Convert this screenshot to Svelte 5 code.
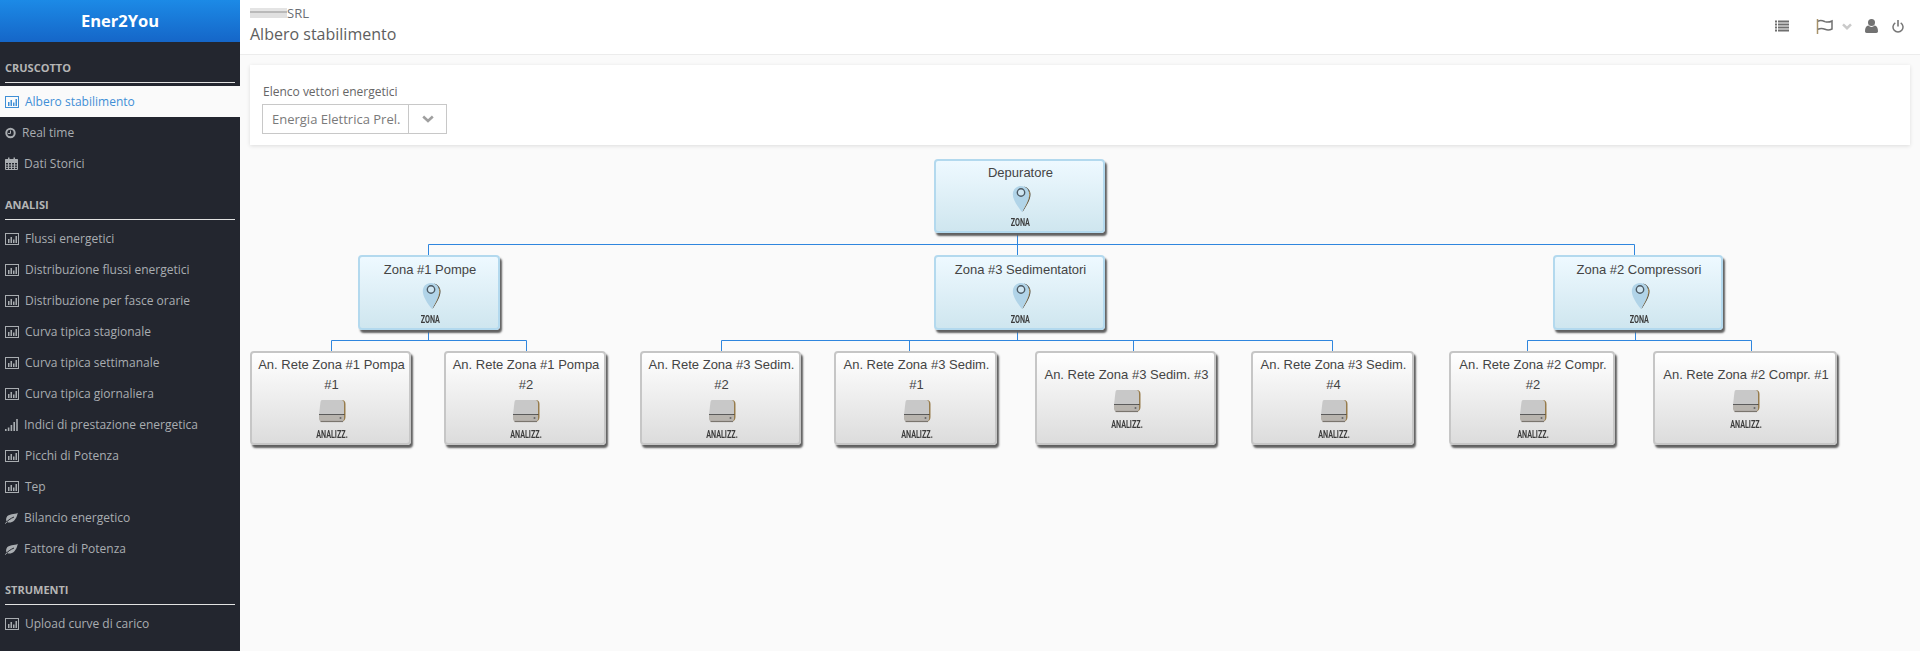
<script>
  const sections = [
    { title: 'CRUSCOTTO', items: [
      { label: 'Albero stabilimento', icon: 'bars', active: true },
      { label: 'Real time', icon: 'clock' },
      { label: 'Dati Storici', icon: 'calendar' }
    ]},
    { title: 'ANALISI', items: [
      { label: 'Flussi energetici', icon: 'bars' },
      { label: 'Distribuzione flussi energetici', icon: 'bars' },
      { label: 'Distribuzione per fasce orarie', icon: 'bars' },
      { label: 'Curva tipica stagionale', icon: 'bars' },
      { label: 'Curva tipica settimanale', icon: 'bars' },
      { label: 'Curva tipica giornaliera', icon: 'bars' },
      { label: 'Indici di prestazione energetica', icon: 'signal' },
      { label: 'Picchi di Potenza', icon: 'bars' },
      { label: 'Tep', icon: 'bars' },
      { label: 'Bilancio energetico', icon: 'leaf' },
      { label: 'Fattore di Potenza', icon: 'leaf' }
    ]},
    { title: 'STRUMENTI', items: [
      { label: 'Upload curve di carico', icon: 'bars' }
    ]}
  ];

  const ox = 240, oy = 145;
  const nodes = [
    { t: 'Depuratore', x: 934, y: 159, w: 171, h: 74, zone: true },
    { t: 'Zona #1 Pompe', x: 358, y: 255, w: 142, h: 75, zone: true },
    { t: 'Zona #3 Sedimentatori', x: 934, y: 255, w: 171, h: 75, zone: true },
    { t: 'Zona #2 Compressori', x: 1553, y: 255, w: 170, h: 75, zone: true },
    { t: 'An. Rete Zona #1 Pompa #1', x: 250, y: 351, w: 161, h: 94 },
    { t: 'An. Rete Zona #1 Pompa #2', x: 444, y: 351, w: 162, h: 94 },
    { t: 'An. Rete Zona #3 Sedim. #2', x: 640, y: 351, w: 161, h: 94 },
    { t: 'An. Rete Zona #3 Sedim. #1', x: 834, y: 351, w: 163, h: 94 },
    { t: 'An. Rete Zona #3 Sedim. #3', x: 1035, y: 351, w: 181, h: 94 },
    { t: 'An. Rete Zona #3 Sedim. #4', x: 1251, y: 351, w: 163, h: 94 },
    { t: 'An. Rete Zona #2 Compr. #2', x: 1449, y: 351, w: 166, h: 94 },
    { t: 'An. Rete Zona #2 Compr. #1', x: 1653, y: 351, w: 184, h: 94 }
  ];

  const links = [
    'M1017.5 233V255',
    'M428.5 255V244.5H1634.5V255',
    'M428.5 330V340.5M331.5 351V340.5H526.5V351',
    'M1017.5 330V340.5M721.5 351V340.5H1332.5V351M909.5 340.5V351M1133.5 340.5V351',
    'M1635.5 330V340.5M1527.5 351V340.5H1751.5V351'
  ];
</script>

{#snippet navIcon(name)}
  {#if name === 'bars'}
    <svg class="ni" width="14" height="12" viewBox="0 0 14 12">
      <rect x="0.5" y="0.5" width="13" height="11" fill="none" stroke="currentColor"/>
      <path d="M3 6h1.500v4H3zM5.500 4H7v6H5.500zM8 6.500h1.500V10H8zM10.500 3H12v7h-1.500z" fill="currentColor"/>
    </svg>
  {:else if name === 'clock'}
    <svg class="ni" width="11" height="12" viewBox="0 0 11 12">
      <circle cx="5.500" cy="6" r="4.200" fill="none" stroke="currentColor" stroke-width="2"/>
      <path d="M5.500 3.500V6.500H3" fill="none" stroke="currentColor"/>
    </svg>
  {:else if name === 'calendar'}
    <svg class="ni" width="13" height="13" viewBox="0 0 13 13">
      <path d="M.5 2.500h12v10H.5zM.5 5.500h12M.5 8h12M.5 10.300h12M3.500 5.500v7M6.500 5.500v7M9.500 5.500v7" fill="none" stroke="currentColor"/>
      <path d="M.5 2h12v3H.5zM3 .5h1.500V3H3zM8.500 .5H10V3H8.500z" fill="currentColor"/>
    </svg>
  {:else if name === 'signal'}
    <svg class="ni" width="13" height="12" viewBox="0 0 13 12">
      <path d="M0 10h1.600v2H0zM2.800 8.500h1.600V12H2.800zM5.600 6h1.600v6H5.600zM8.400 3h1.600v9H8.400zM11.200 0h1.600v12h-1.600z" fill="currentColor"/>
    </svg>
  {:else}
    <svg class="ni" width="13" height="12" viewBox="0 0 13 12">
      <path d="M12.800 .8C9.500 3 3.500 1.200 1.500 5.500 .8 7 1 9 2 10 5 11.500 11 10.500 12.800 .8z" fill="currentColor"/>
      <path d="M0 11.800C2.500 8.500 5.500 6.500 9 5" fill="none" stroke="#23262f" stroke-width="1"/>
      <path d="M0 11.800L2 9.800" fill="none" stroke="currentColor" stroke-width="1"/>
    </svg>
  {/if}
{/snippet}

<div class="page">
  <aside class="side">
    <div class="brand">Ener2You</div>
    {#each sections as s}
      <div class="sec-title">{s.title}</div>
      <ul class="nav">
        {#each s.items as it}
          <li class="item" class:active={it.active}>
            {@render navIcon(it.icon)}
            <span>{it.label}</span>
          </li>
        {/each}
      </ul>
    {/each}
  </aside>

  <main class="main">
    <header class="top">
      <div class="crumb">
        <div class="company"><i class="blur"></i><span>SRL</span></div>
        <h1>Albero stabilimento</h1>
      </div>
      <div class="tools">
        <svg class="t-list" width="14" height="12" viewBox="0 0 14 12">
          <path d="M0 .5h2v2H0zM3 .5h11v2H3zM0 3.500h2v2H0zM3 3.500h11v2H3zM0 6.500h2v2H0zM3 6.500h11v2H3zM0 9.500h2v2H0zM3 9.500h11v2H3z" fill="#6f6f6f"/>
        </svg>
        <svg class="t-flag" width="17" height="15" viewBox="0 0 17 15">
          <path d="M1.500 0V15" stroke="#a8936a" stroke-width="1.500" fill="none"/>
          <path d="M2 2.200C5 .8 7 1.800 9 2.600 11.500 3.500 14 3 16 2V10C14 11 11.500 11.300 9 10.300 7 9.500 5 9 2 10.300" fill="none" stroke="#707070" stroke-width="1.500"/>
        </svg>
        <svg class="t-chev" width="10" height="7" viewBox="0 0 10 7">
          <path d="M1 1.300L5 5.200 9 1.300" fill="none" stroke="#cacaca" stroke-width="2.500"/>
        </svg>
        <svg class="t-user" width="13" height="14" viewBox="0 0 13 14">
          <circle cx="6.500" cy="3.600" r="3.500" fill="#727272"/>
          <path d="M0 12.300C0 9 1.200 7 3.400 6.600 4.200 7.500 5.300 8 6.500 8S8.800 7.500 9.600 6.600C11.800 7 13 9 13 12.300 13 13.300 12.300 14 11.300 14H1.700C.7 14 0 13.300 0 12.300z" fill="#727272"/>
        </svg>
        <svg class="t-power" width="12" height="13" viewBox="0 0 12 13">
          <path d="M3.300 2.800A5 5 0 1 0 8.700 2.800" fill="none" stroke="#777" stroke-width="1.500"/>
          <path d="M6 0V6.500" fill="none" stroke="#777" stroke-width="1.600"/>
        </svg>
      </div>
    </header>

    <section class="card">
      <div class="f-label">Elenco vettori energetici</div>
      <div class="select">
        <span class="value">Energia Elettrica Prel.</span>
        <span class="caret">
          <svg width="12" height="8" viewBox="0 0 12 8">
            <path d="M1.200 1.500L6 6 10.800 1.500" fill="none" stroke="#a0a0a0" stroke-width="2.600"/>
          </svg>
        </span>
      </div>
    </section>

    <div class="tree">
      <svg class="links" width="1680" height="506" viewBox="240 145 1680 506">
        {#each links as d}<path d={d} fill="none" stroke="#2f86de" stroke-width="1"/>{/each}
      </svg>
      {#each nodes as n}
        <div
          class="node"
          class:zone={n.zone}
          style="left:{n.x - ox}px;top:{n.y - oy}px;width:{n.w}px;height:{n.h}px"
        >
          <div class="n-title">{n.t}</div>
          <div class="n-icon">
            {#if n.zone}
              <svg class="pin" width="20" height="28" viewBox="0 0 20 28">
                <path d="M12 1.500C16 2.500 18.500 5.500 18.500 9.500 18.500 15 14 21.500 10.500 27 10.800 25 15 18 15.500 9 15.500 6 14 3 12 1.500z" fill="#4a4234"/>
                <path d="M17.500 6.500C18.500 11 15 18 12 23" fill="none" stroke="#c9a25d" stroke-width=".8"/>
                <path d="M9 1C4 1 .8 4.600 .8 9.200 .8 14.500 5.500 21.500 10 27 13.500 21 17.200 15 17.200 9.200 17.200 4.600 14 1 9 1z" fill="#b1d4e8"/>
                <circle cx="9" cy="7.500" r="3.700" fill="#cfe6f2" stroke="#4c5a64" stroke-width="1.400"/>
              </svg>
            {:else}
              <svg width="28" height="24" viewBox="0 0 28 24">
                <path d="M22 1H24C26 1 27.500 2.500 27.500 5V18C27.500 20 26.500 22 25 22.500L25 15 24 3z" fill="#977c4c"/>
                <path d="M4 1H23.500C25 1 26 2.500 26 4.500V15.500H1L2.500 3C2.700 1.800 3.200 1 4 1z" fill="#c8c8c8"/>
                <path d="M1 15H26.500V15.800H1z" fill="#3c3c3c"/>
                <path d="M1 16H26V19.500C26 21.400 25 22.500 23.500 22.500H4C2 22.500 1 21.200 1 19.500z" fill="#b8b4ae"/>
                <path d="M2.500 22.500H25" stroke="#7a756e" stroke-width="1.200"/>
                <circle cx="22.500" cy="19" r="1" fill="#666"/>
              </svg>
            {/if}
          </div>
          <div class="n-kind"><span>{n.zone ? 'ZONA' : 'ANALIZZ.'}</span></div>
        </div>
      {/each}
    </div>
  </main>
</div>

<style>
  :global(body) { margin: 0; background: #fafafa; }
  .page {
    display: flex;
    width: 1920px;
    height: 651px;
    overflow: hidden;
    font-family: "Open Sans", sans-serif;
    background: #fafafa;
  }
  .side {
    flex: 0 0 240px;
    background: #23262f;
    color: #a9adb1;
  }
  .brand {
    height: 42px;
    line-height: 41px;
    text-align: center;
    color: #fff;
    font-weight: 700;
    font-size: 16.5px;
    background: linear-gradient(#1c8ae6, #1566c8);
  }
  .sec-title {
    margin: 0 5px;
    padding: 18px 0 6px;
    line-height: 16px;
    font-size: 11px;
    font-weight: 700;
    color: #b5b5b5;
    border-bottom: 1px solid #e2e2e2;
  }
  .nav { list-style: none; margin: 3px 0 0; padding: 0; }
  .item {
    height: 31px;
    display: flex;
    align-items: center;
    padding-left: 5px;
    font-size: 12px;
  }
  .item.active { background: #fafafa; color: #3f8fd6; }
  .ni { flex: none; margin-right: 6px; }

  .main { flex: 1; min-width: 0; display: flex; flex-direction: column; }
  .top {
    height: 54px;
    flex: none;
    background: #fff;
    border-bottom: 1px solid #ececec;
    display: flex;
    justify-content: space-between;
  }
  .crumb { padding: 5px 0 0 10px; color: #666; }
  .company {
    height: 16px;
    display: flex;
    align-items: center;
    font-size: 13px;
    line-height: 16px;
    color: #6b6f75;
  }
  .blur {
    width: 37px;
    height: 10px;
    background: linear-gradient(#e4e4e4 0 35%, #b9b9b9 35% 55%, #e0e0e0 55%);
    filter: blur(0.7px);
  }
  h1 {
    margin: 0;
    padding-top: 2px;
    font-size: 16px;
    line-height: 22px;
    font-weight: 400;
    color: #5e5e5e;
  }
  .tools { display: flex; align-items: center; padding: 0 16px 2px 0; }
  .t-list { margin-right: 27px; }
  .t-flag { margin-right: 9px; }
  .t-chev { margin-right: 13px; }
  .t-user { margin-right: 14px; }

  .card {
    flex: none;
    height: 80px;
    box-sizing: border-box;
    margin: 10px 10px 0;
    padding: 19px 12px 0;
    background: #fff;
    box-shadow: 0 1px 4px rgba(0, 0, 0, 0.12);
  }
  .f-label { font-size: 12px; line-height: 16px; color: #666; margin: 0 0 4px 1px; }
  .select {
    display: flex;
    width: 185px;
    height: 30px;
    box-sizing: border-box;
    border: 1px solid #c8c8c8;
    background: #fff;
    font-size: 13px;
    color: #7a7a7a;
  }
  .value { flex: 1; line-height: 28px; padding-left: 9px; white-space: nowrap; overflow: hidden; }
  .caret {
    flex: 0 0 37px;
    border-left: 1px solid #c8c8c8;
    display: flex;
    align-items: center;
    justify-content: center;
  }

  .tree { position: relative; flex: 1; }
  .links { position: absolute; left: 0; top: 0; }
  .node {
    position: absolute;
    box-sizing: border-box;
    display: flex;
    flex-direction: column;
    align-items: center;
    justify-content: center;
    padding: 0 0 1px 2px;
    border: 2px solid #c6c6c6;
    border-radius: 4px;
    background: linear-gradient(#ffffff, #dcdcdc);
    box-shadow: 2px 3px 2px #5f5f5f;
    font-family: "Liberation Sans", Arial, sans-serif;
    text-align: center;
    color: #444;
  }
  .node.zone {
    border-color: #b3d9ee;
    background: linear-gradient(#eef9ff, #cfe6ef);
  }
  .n-title { font-size: 13px; line-height: 20px; }
  .n-icon {
    height: 28px;
    margin-top: 2px;
    display: flex;
    align-items: center;
    justify-content: center;
  }
  .pin { margin-left: 3px; }
  .n-kind {
    margin-top: 5px;
    height: 10px;
    line-height: 10px;
    font-family: "Roboto", sans-serif;
    font-size: 10px;
    font-weight: 700;
    color: #3c3c3c;
  }
  .n-kind span { display: inline-block; transform: scaleX(0.72); }
</style>
